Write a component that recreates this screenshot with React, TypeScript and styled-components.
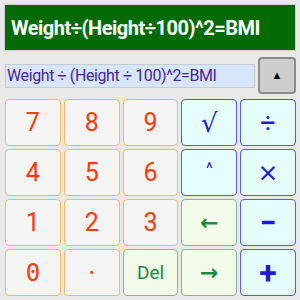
import React from 'react';
import styled, { createGlobalStyle } from 'styled-components';

type Tone = 'num' | 'op' | 'nav';
type Face = 'mono' | 'dejavu';

const keys: { label: string; tone: Tone; size?: number; bold?: boolean; raise?: number; face?: Face }[] = [
  { label: '7', tone: 'num' },
  { label: '8', tone: 'num' },
  { label: '9', tone: 'num' },
  { label: '√', tone: 'op', size: 26, face: 'dejavu' },
  { label: '÷', tone: 'op', size: 27 },
  { label: '4', tone: 'num' },
  { label: '5', tone: 'num' },
  { label: '6', tone: 'num' },
  { label: '^', tone: 'op', size: 16, raise: 8 },
  { label: '×', tone: 'op', size: 25, face: 'dejavu' },
  { label: '1', tone: 'num' },
  { label: '2', tone: 'num' },
  { label: '3', tone: 'num' },
  { label: '←', tone: 'nav', size: 22, bold: true, face: 'dejavu' },
  { label: '−', tone: 'op', size: 30, bold: true },
  { label: '0', tone: 'num', face: 'mono', size: 24 },
  { label: '•', tone: 'num', size: 15 },
  { label: 'Del', tone: 'nav', size: 19 },
  { label: '→', tone: 'nav', size: 22, bold: true, face: 'dejavu' },
  { label: '+', tone: 'op', size: 32, bold: true },
];

const faces = {
  mono: "'DejaVu Sans Mono', monospace",
  dejavu: "'DejaVu Sans', sans-serif",
};

const App = () => {
  return (
    <Page>
      <GlobalStyle />
      <Header>Weight÷(Height÷100)^2=BMI</Header>
      <InputRow>
        <Field>Weight ÷ (Height ÷ 100)^2=BMI</Field>
        <ArrowBtn>▲</ArrowBtn>
      </InputRow>
      <Keypad>
        {keys.map((k) => (
          <Key key={k.label} tone={k.tone} face={k.face} size={k.size} bold={k.bold} raise={k.raise}>
            {k.label}
          </Key>
        ))}
      </Keypad>
    </Page>
  );
};

export default App;

const GlobalStyle = createGlobalStyle`
  body {
    margin: 0;
    background: #e9e9e9;
    font-family: 'Roboto', 'Noto Sans', sans-serif;
  }
`;

const Page = styled.div`
  width: 300px;
  height: 300px;
  box-sizing: border-box;
  padding: 4px;
  background: #e9e9e9;
`;

const Header = styled.div`
  height: 47px;
  box-sizing: border-box;
  background: #036b03;
  border: 1px solid #d0d0d0;
  color: #ffffff;
  font-family: 'Roboto', sans-serif;
  font-weight: bold;
  font-size: 20px;
  letter-spacing: -0.5px;
  display: flex;
  align-items: center;
  padding-left: 6px;
  white-space: nowrap;
  overflow: hidden;
`;

const InputRow = styled.div`
  display: flex;
  align-items: center;
  margin-top: 6px;
  margin-left: 1px;
  gap: 3px;
`;

const Field = styled.div`
  width: 250px;
  height: 24px;
  box-sizing: border-box;
  background: #d7e6f9;
  border: 1px solid #c4ccd6;
  color: #4a2496;
  font-family: 'Roboto', sans-serif;
  font-size: 16px;
  letter-spacing: -0.4px;
  line-height: 22px;
  padding-left: 1px;
  white-space: nowrap;
  overflow: hidden;
`;

const ArrowBtn = styled.div`
  width: 38px;
  height: 37px;
  box-sizing: border-box;
  background: #cdcdcd;
  border: 2px solid #8a8a8a;
  border-radius: 4px;
  display: flex;
  align-items: center;
  justify-content: center;
  font-size: 11px;
  color: #000;
`;

const Keypad = styled.div`
  display: grid;
  grid-template-columns: repeat(5, 1fr);
  grid-template-rows: repeat(4, 47px);
  gap: 3px;
  margin-top: 5px;
  margin-left: 1px;
`;

const tones = {
  num: { bg: '#f5f5f5', border: '#f6bb55', color: '#ff3a06' },
  op: { bg: '#e6fdfd', border: '#5a5ad8', color: '#1c1cc8' },
  nav: { bg: '#f3fce8', border: '#84b892', color: '#1c8a44' },
};

const Key = styled.div<{ tone: Tone; face?: Face; size?: number; bold?: boolean; raise?: number }>`
  box-sizing: border-box;
  background: ${(p) => tones[p.tone].bg};
  border: 1.5px solid ${(p) => tones[p.tone].border};
  border-radius: 4px;
  color: ${(p) => tones[p.tone].color};
  display: flex;
  align-items: center;
  justify-content: center;
  padding-bottom: ${(p) => (p.raise ? `${p.raise}px` : '0')};
  font-size: ${(p) => p.size ?? 25}px;
  font-weight: ${(p) => (p.bold ? 'bold' : 'normal')};
  font-family: ${(p) => (p.face ? faces[p.face] : "'Roboto', sans-serif")};
`;
